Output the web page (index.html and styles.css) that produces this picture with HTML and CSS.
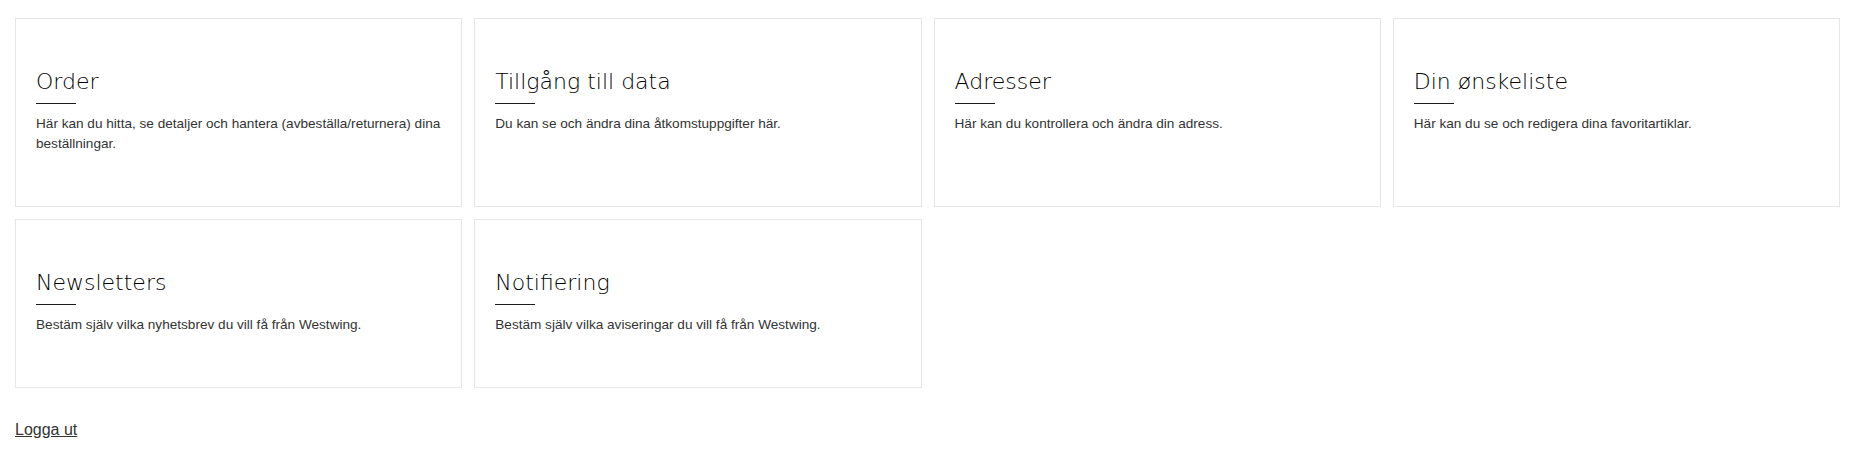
FILE: index.html
```html
<!DOCTYPE html>
<html>
  <head>
    <meta charset="utf-8">
    <title>Mitt konto</title>
    <link rel="stylesheet" href="styles.css">
  </head>
  <body>
    <div class="account">
      <div class="tiles">
        <a class="tile" href="#">
          <h2>Order</h2>
          <p>Här kan du hitta, se detaljer och hantera (avbeställa/returnera) dina beställningar.</p>
        </a>
        <a class="tile" href="#">
          <h2>Tillgång till data</h2>
          <p>Du kan se och ändra dina åtkomstuppgifter här.</p>
        </a>
        <a class="tile" href="#">
          <h2>Adresser</h2>
          <p>Här kan du kontrollera och ändra din adress.</p>
        </a>
        <a class="tile" href="#">
          <h2>Din ønskeliste</h2>
          <p>Här kan du se och redigera dina favoritartiklar.</p>
        </a>
        <a class="tile" href="#">
          <h2>Newsletters</h2>
          <p>Bestäm själv vilka nyhetsbrev du vill få från Westwing.</p>
        </a>
        <a class="tile" href="#">
          <h2>Notifiering</h2>
          <p>Bestäm själv vilka aviseringar du vill få från Westwing.</p>
        </a>
      </div>
      <a class="logout" href="#">Logga ut</a>
    </div>
  </body>
</html>
```

FILE: styles.css
```css
* {
  box-sizing: border-box;
}

body {
  font-family: "Liberation Sans", Arial, sans-serif;
  margin: 0;
  padding: 0;
  background-color: #fff;
  color: #333;
}

.account {
  padding: 18px 17px 0 15px;
}

.tiles {
  display: grid;
  grid-template-columns: repeat(4, 1fr);
  gap: 12px;
}

.tile {
  display: block;
  border: 1px solid #e6e6e6;
  padding: 50px 20px 52px;
  color: #333;
  text-decoration: none;
}

.tile h2 {
  font-family: "DejaVu Sans", sans-serif;
  font-size: 22px;
  font-weight: 200;
  line-height: 26px;
  color: #000;
  margin: 0 0 10px;
}

.tile h2::after {
  content: "";
  display: block;
  width: 40px;
  height: 1px;
  background-color: #1a1a1a;
  margin-top: 8px;
}

.tile p {
  font-size: 13.6px;
  line-height: 20px;
  margin: 0;
}

.logout {
  display: inline-block;
  margin-top: 32px;
  font-size: 16px;
  line-height: 20px;
  color: #333;
}
```
